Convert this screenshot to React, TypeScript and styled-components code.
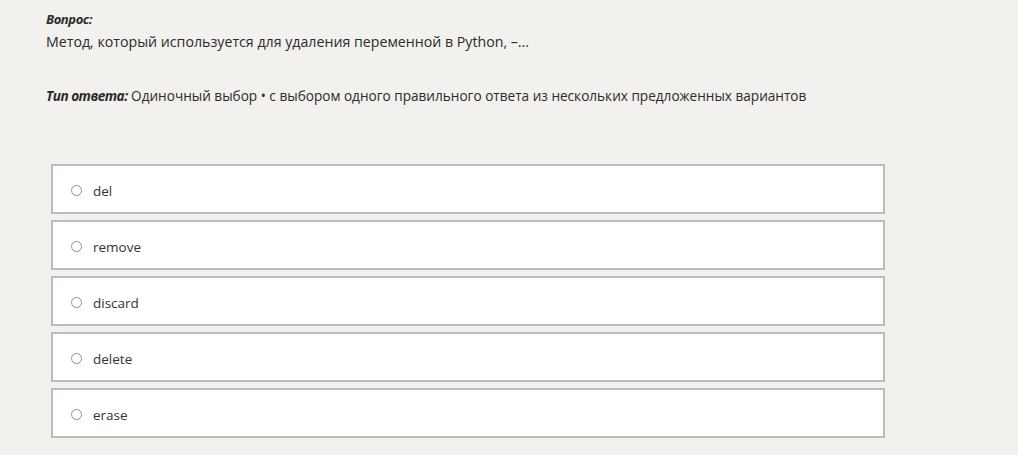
import * as React from 'react'
import styled, { createGlobalStyle } from 'styled-components'

const Global = createGlobalStyle`
    body {
        margin: 0;
        background: #f2f1ee;
        font-family: 'Open Sans', 'Noto Sans', sans-serif;
        color: #2b2b2b;
    }
`

const Page = styled.div`
    padding: 10px 0 0 46px;
    width: 839px;
`

const Label = styled.div`
    font-size: 13px;
    font-weight: 700;
    font-style: italic;
    letter-spacing: -0.4px;
    line-height: 18px;
`

const Question = styled.div`
    font-size: 14.2px;
    line-height: 20px;
    margin-top: 4px;
`

const AnswerType = styled.div`
    margin-top: 35px;
    font-size: 13.6px;
    line-height: 18px;

    b {
        font-style: italic;
        letter-spacing: -0.5px;
    }
`

const Options = styled.div`
    margin: 59px 0 0 5px;
    display: flex;
    flex-direction: column;
    gap: 6px;
`

const Option = styled.label`
    display: flex;
    align-items: center;
    gap: 11px;
    height: 50px;
    box-sizing: border-box;
    padding: 3px 0 0 18px;
    background: #fff;
    border: 2px solid #bdbcb8;
    font-size: 13.5px;
    color: #333;
    cursor: pointer;
`

const Radio = styled.span`
    width: 9px;
    height: 9px;
    border: 1.5px solid #909090;
    border-radius: 50%;
    flex: none;
`

const answers = ['del', 'remove', 'discard', 'delete', 'erase']

export default function App() {
    return (
        <>
            <Global />
            <Page>
                <Label>Вопрос:</Label>
                <Question>Метод, который используется для удаления переменной в Python, –...</Question>
                <AnswerType>
                    <b>Тип ответа:</b> Одиночный выбор • с выбором одного правильного ответа из нескольких предложенных вариантов
                </AnswerType>
                <Options>
                    {answers.map(a => (
                        <Option key={a}>
                            <Radio />
                            {a}
                        </Option>
                    ))}
                </Options>
            </Page>
        </>
    )
}
